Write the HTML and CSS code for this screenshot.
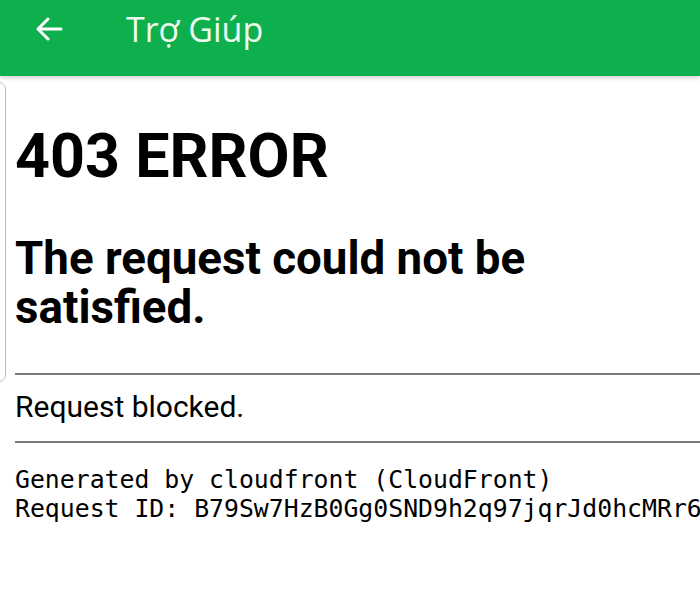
FILE: index.html
```html
<!DOCTYPE html>
<html lang="vi">
<head>
<meta charset="utf-8">
<title>Trợ Giúp</title>
<link rel="stylesheet" href="styles.css">
</head>
<body>
<header class="appbar">
  <span class="back" aria-label="Back">
    <svg width="28" height="24" viewBox="0 0 28 24"><path d="M26 12H3M13 2L3 12l10 10" fill="none" stroke="#fff" stroke-width="3" stroke-linecap="round" stroke-linejoin="round"/></svg>
  </span>
  <span class="appbar-title">Trợ Giúp</span>
</header>
<div class="drawer-edge"></div>
<main class="page">
  <h1 class="code">403 ERROR</h1>
  <h2 class="reason">The request could not be satisfied.</h2>
  <hr class="rule rule-first">
  <p class="msg">Request blocked.</p>
  <hr class="rule rule-second">
  <pre class="meta">Generated by cloudfront (CloudFront)
Request ID: B79Sw7HzB0Gg0SND9h2q97jqrJd0hcMRr6</pre>
</main>
</body>
</html>
```
FILE: styles.css
```css
html, body {
  margin: 0;
  padding: 0;
  background: #fff;
  overflow: hidden;
}
body {
  width: 700px;
  height: 598px;
  position: relative;
  font-family: Roboto, "Liberation Sans", sans-serif;
  color: #000;
}
.appbar {
  height: 76px;
  background: #0db04c;
  display: flex;
  align-items: center;
  box-shadow: 0 2px 4px rgba(0,0,0,0.18);
  position: relative;
  z-index: 1;
}
.back {
  display: flex;
  margin-left: 35px;
  margin-top: -18px;
  width: 28px;
  height: 24px;
}
.appbar-title {
  margin-left: 63px;
  margin-top: -18px;
  font-family: "Open Sans", sans-serif;
  font-size: 34px;
  color: #eefaf0;
  line-height: 40px;
}
.drawer-edge {
  position: absolute;
  left: -20px;
  top: 82px;
  width: 26px;
  height: 300px;
  border: 1px solid #bdbdbd;
  border-radius: 0 7px 7px 0;
  box-sizing: border-box;
}
.page {
  padding: 0 0 0 15px;
}
.code {
  margin: 44px 0 0;
  font-size: 61px;
  font-weight: 700;
  line-height: 72px;
}
.reason {
  margin: 42px 0 0;
  font-size: 45.7px;
  font-weight: 700;
  line-height: 49px;
  width: 560px;
}
.rule {
  border: 0;
  height: 2px;
  background: #7a7a7a;
  margin: 0;
}
.rule-first {
  margin-top: 41px;
}
.msg {
  margin: 15px 0 0;
  font-size: 30px;
  line-height: 34px;
}
.rule-second {
  margin-top: 17px;
}
.meta {
  margin: 22px 0 0;
  font-family: "DejaVu Sans Mono", monospace;
  font-size: 24.8px;
  line-height: 29px;
  white-space: pre;
}
```
